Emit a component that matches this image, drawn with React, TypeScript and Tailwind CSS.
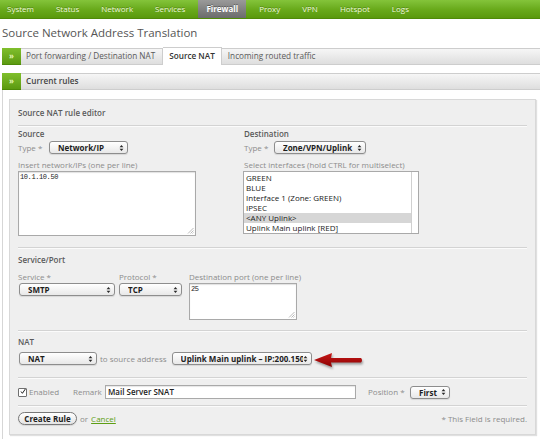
import React from 'react';

const navItems = ['System', 'Status', 'Network', 'Services', 'Firewall', 'Proxy', 'VPN', 'Hotspot', 'Logs'];

const interfaces = ['GREEN', 'BLUE', 'Interface 1 (Zone: GREEN)', 'IPSEC', '<ANY Uplink>', 'Uplink Main uplink [RED]'];

const Arrows = () => (
  <svg width="5" height="8" viewBox="0 0 5 8" className="shrink-0">
    <path d="M0.6 3.3 L2.5 0.9 L4.4 3.3 Z" fill="#2a2a2a" />
    <path d="M0.6 4.7 L2.5 7.1 L4.4 4.7 Z" fill="#2a2a2a" />
  </svg>
);

const Select = ({ label, className }: { label: string; className: string }) => (
  <div
    className={`h-[13px] flex items-center shrink-0 rounded-[3px] border border-[#8d8d8d] bg-linear-to-b from-white to-[#e8e8e8] pl-[8px] pr-[3px] shadow-[0_1px_1px_rgba(0,0,0,0.1)] ${className}`}
  >
    <span className="flex-1 overflow-hidden whitespace-nowrap text-[8px] font-bold leading-[11px] text-[#1d1d1d]">{label}</span>
    <Arrows />
  </div>
);

const Label = ({ children, className = '' }: { children: React.ReactNode; className?: string }) => (
  <div className={`text-[8px] leading-[10px] text-[#8c8c8c] whitespace-nowrap ${className}`}>{children}</div>
);

const Heading = ({ children, className = '' }: { children: React.ReactNode; className?: string }) => (
  <div className={`text-[8px] leading-[10px] font-semibold text-[#5a5a5a] ${className}`}>{children}</div>
);

const Rule = ({ className = '' }: { className?: string }) => (
  <div className={`h-px bg-[#d3d3d3] shadow-[0_1px_0_#fbfbfb] ${className}`} />
);

// little diagonal grip in the corner of a textarea
const Grip = () => (
  <svg width="7" height="7" viewBox="0 0 7 7" className="absolute right-[1px] bottom-[1px]">
    <path d="M6.5 1 L1 6.5 M6.5 3.5 L3.5 6.5 M6.5 5.5 L5.5 6.5" stroke="#a8a8a8" strokeWidth="0.8" />
  </svg>
);

const TextArea = ({ value, className }: { value: string; className: string }) => (
  <div className={`relative bg-white border border-[#a9a9a9] shadow-[inset_0_1px_1px_rgba(0,0,0,0.12)] ${className}`}>
    <div className="pl-[1px] pt-[1px] font-['Liberation_Mono',monospace] text-[7px] leading-[9px] tracking-[-0.4px] text-[#222]">{value}</div>
    <Grip />
  </div>
);

const GreenTab = () => (
  <div className="ml-[2px] w-[19px] h-[17px] shrink-0 flex items-center justify-center bg-linear-to-b from-[#80bf2c] to-[#5c9a10] border-b border-[#4d8a08] text-[8px] font-bold leading-none text-[#e4f5b6]">
    »
  </div>
);

export default function App() {
  return (
    <div className="relative w-[540px] h-[439px] overflow-hidden bg-white font-['Open_Sans',sans-serif]">
      {/* top menu */}
      <nav className="h-[19px] flex bg-linear-to-b from-[#84c43a] via-[#6aab1c] to-[#5a990c] border-b border-[#4f8a08]">
        <div className="flex -ml-[4px]">
          {navItems.map((item) =>
            item === 'Firewall' ? (
              <div
                key={item}
                className="mx-[2px] px-[8px] flex items-center bg-linear-to-b from-[#9a9a9a] to-[#6c6c6c] text-[8px] font-bold text-white [text-shadow:0_-1px_0_rgba(0,0,0,0.35)]"
              >
                {item}
              </div>
            ) : (
              <div
                key={item}
                className="px-[11px] flex items-center text-[8px] text-[#eef8dc] [text-shadow:0_-1px_0_rgba(0,0,0,0.25)]"
              >
                {item}
              </div>
            )
          )}
        </div>
      </nav>

      <h1 className="h-[28px] flex items-center pl-[2px] text-[11.5px] text-[#555]">Source Network Address Translation</h1>

      {/* tabs */}
      <div className="h-[18px] flex items-end">
        <GreenTab />
        <div className="h-[17px] flex items-center pl-[5px] pr-[7px] border-y border-r border-[#cdcdcd] bg-linear-to-b from-[#f6f6f6] to-[#dedede] text-[8.2px] text-[#5a5a5a] whitespace-nowrap">
          Port forwarding / Destination NAT
        </div>
        <div className="h-[18px] flex items-center px-[6px] border-t border-r border-[#cdcdcd] bg-white text-[8.2px] font-semibold text-[#333] whitespace-nowrap">
          Source NAT
        </div>
        <div className="flex-1 h-[17px] flex items-center pl-[6px] border-y border-[#cdcdcd] bg-linear-to-b from-[#f6f6f6] to-[#dedede] text-[8.2px] text-[#5a5a5a] whitespace-nowrap">
          Incoming routed traffic
        </div>
      </div>

      {/* current rules */}
      <div className="mt-[8px] h-[17px] flex">
        <GreenTab />
        <div className="flex-1 flex items-center pl-[5px] border-y border-[#cdcdcd] bg-linear-to-b from-[#f6f6f6] to-[#dedede] text-[8.2px] font-semibold text-[#444]">
          Current rules
        </div>
      </div>

      <div className="ml-[2px] h-[349px] border-l border-[#d6d6d6] pl-[6px] pt-[9px]">
        <div className="w-[527px] border border-[#d8d8d8] bg-[#efefef] shadow-[1px_1px_1px_rgba(0,0,0,0.12)] px-[8px] pb-[9px]">
          <div className="h-[25px] flex items-center">
            <Heading>Source NAT rule editor</Heading>
          </div>
          <Rule />

          <div className="flex">
            <div className="w-[226px]">
              <Heading className="mt-[3px]">Source</Heading>
              <div className="mt-[2px] flex items-center">
                <Label className="w-[31px]">Type *</Label>
                <Select label="Network/IP" className="w-[79px]" />
              </div>
              <Label className="mt-[6px]">Insert network/IPs (one per line)</Label>
              <TextArea value="10.1.10.50" className="mt-[1px] w-[178px] h-[65px]" />
            </div>
            <div>
              <Heading className="mt-[3px]">Destination</Heading>
              <div className="mt-[2px] flex items-center">
                <Label className="w-[30px]">Type *</Label>
                <Select label="Zone/VPN/Uplink" className="w-[92px]" />
              </div>
              <Label className="mt-[6px]">Select interfaces (hold CTRL for multiselect)</Label>
              <div className="mt-[1px] -ml-px w-[176px] h-[63px] flex bg-white border border-[#a9a9a9]">
                <div className="flex-1 pt-px">
                  {interfaces.map((it) => (
                    <div
                      key={it}
                      className={`pl-[2px] text-[8px] leading-[10px] text-[#222] whitespace-nowrap ${it === '<ANY Uplink>' ? 'bg-[#d6d6d6]' : ''}`}
                    >
                      {it}
                    </div>
                  ))}
                </div>
                <div className="w-[7px] border-l border-[#d0d0d0]" />
              </div>
            </div>
          </div>

          <Rule className="mt-[11px]" />
          <Heading className="mt-[7px]">Service/Port</Heading>
          <div className="mt-[7px] flex">
            <div className="w-[101px]">
              <Label>Service *</Label>
              <Select label="SMTP" className="mt-[1px] ml-px w-[96px]" />
            </div>
            <div className="w-[70px]">
              <Label>Protocol *</Label>
              <Select label="TCP" className="mt-[1px] w-[63px]" />
            </div>
            <div>
              <Label>Destination port (one per line)</Label>
              <TextArea value="25" className="mt-[1px] w-[108px] h-[37px]" />
            </div>
          </div>

          <Rule className="mt-[10px]" />
          <Heading className="mt-[6px]">NAT</Heading>
          <div className="mt-[5px] flex items-center">
            <Select label="NAT" className="ml-px w-[78px]" />
            <Label className="ml-[3px]">to source address</Label>
            <Select label="Uplink Main uplink – IP:200.150" className="ml-[5px] w-[140px]" />
          </div>

          <Rule className="mt-[12px]" />
          <div className="mt-[7px] h-[14px] flex items-center">
            <div className="w-[55px] flex items-center">
              <div className="w-[9px] h-[9px] bg-white border border-[#6f6f6f] rounded-[1px] flex items-center justify-center">
                <svg width="9" height="9" viewBox="0 0 9 9" className="-mt-[2px] ml-[1px]">
                  <path d="M1.5 4.5 L3.6 7.2 L8 0.8" fill="none" stroke="#111" strokeWidth="1.4" />
                </svg>
              </div>
              <Label className="ml-[2px]">Enabled</Label>
            </div>
            <Label className="w-[32px]">Remark</Label>
            <div className="w-[251px] h-[14px] flex items-center bg-white border border-[#a9a9a9] shadow-[inset_0_1px_1px_rgba(0,0,0,0.1)] pl-[2px] text-[8px] font-semibold text-[#222]">
              Mail Server SNAT
            </div>
            <Label className="ml-[12px] w-[42px]">Position *</Label>
            <Select label="First" className="w-[40px]" />
          </div>

          <Rule className="mt-[6px]" />
          <div className="mt-[6px] h-[13px] flex items-center">
            <div className="w-[59px] h-[13px] flex items-center justify-center rounded-full border border-[#777] bg-linear-to-b from-white to-[#e4e4e4] text-[8px] font-bold text-[#1d1d1d] shadow-[0_1px_1px_rgba(0,0,0,0.1)]">
              Create Rule
            </div>
            <Label className="ml-[3px]">or</Label>
            <span className="ml-[3px] text-[8px] leading-[10px] text-[#5d9e14] underline">Cancel</span>
            <Label className="ml-auto">* This Field is required.</Label>
          </div>
        </div>
      </div>

      {/* red pointer next to the source address select */}
      <svg
        width="54"
        height="20"
        viewBox="0 0 54 20"
        className="absolute left-[312px] top-[351px] drop-shadow-[1px_2px_1px_rgba(0,0,0,0.35)]"
      >
        <defs>
          <linearGradient id="arrowFill" x1="0" y1="0" x2="0" y2="1">
            <stop offset="0" stopColor="#c81818" />
            <stop offset="1" stopColor="#8c0202" />
          </linearGradient>
        </defs>
        <path d="M2 9 L20 2 L19 7 L49 7 Q51 9 49 11.5 L19 11.5 L20 16 Z" fill="url(#arrowFill)" />
      </svg>
    </div>
  );
}
